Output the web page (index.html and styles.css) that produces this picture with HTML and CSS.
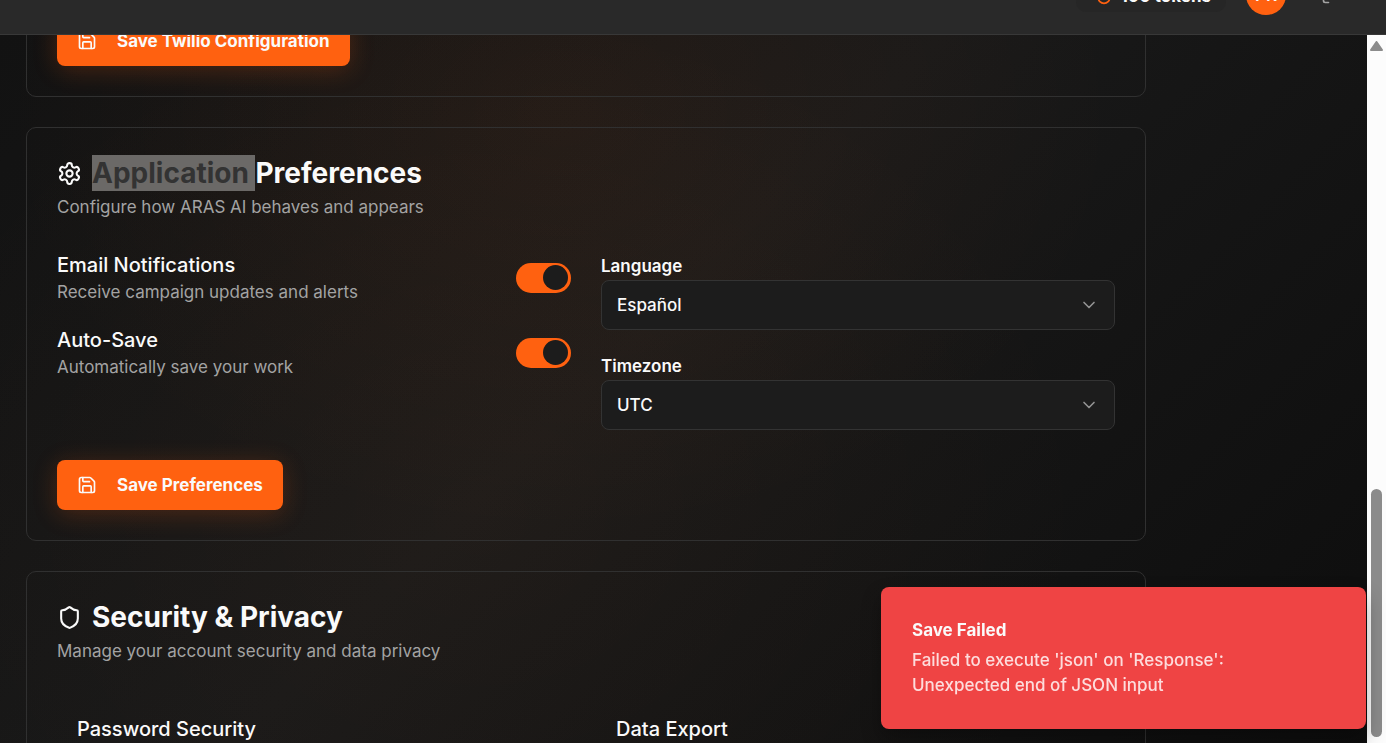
FILE: index.html
```html
<!DOCTYPE html>
<html lang="en">
<head>
<meta charset="utf-8">
<title>ARAS AI Settings</title>
<link rel="stylesheet" href="styles.css">
</head>
<body>
<header class="topbar">
  <div class="tokens">
    <svg class="icon-token" viewBox="0 0 24 24"><path d="M12 22a7 7 0 0 0 7-7c0-2-1-3.900-3-5.500S12.500 5 12 2.500c-.500 2.500-2 4.900-4 6.500C6 11 5 13 5 15a7 7 0 0 0 7 7z"/></svg>
    <span>100 tokens</span>
  </div>
  <button class="avatar" type="button">PR</button>
  <button class="logout" type="button" aria-label="Log out">
    <svg viewBox="0 0 24 24"><path d="M9 21H5a2 2 0 0 1-2-2V5a2 2 0 0 1 2-2h4"/><path d="m16 17 5-5-5-5M21 12H9"/></svg>
  </button>
</header>
<div class="viewport">
  <main class="content">
    <section class="card card-twilio">
      <button class="btn" type="button">
        <svg viewBox="0 0 24 24"><path d="M15.200 3a2 2 0 0 1 1.400.600l3.800 3.800a2 2 0 0 1 .600 1.400V19a2 2 0 0 1-2 2H5a2 2 0 0 1-2-2V5a2 2 0 0 1 2-2z"/><path d="M17 21v-7a1 1 0 0 0-1-1H8a1 1 0 0 0-1 1v7M7 3v4a1 1 0 0 0 1 1h7"/></svg>
        Save Twilio Configuration
      </button>
    </section>

    <section class="card">
      <div class="card-head">
        <h2 class="title">
          <svg viewBox="0 0 24 24"><path d="M12.220 2h-.440a2 2 0 0 0-2 2v.180a2 2 0 0 1-1 1.730l-.430.250a2 2 0 0 1-2 0l-.150-.080a2 2 0 0 0-2.730.730l-.220.380a2 2 0 0 0 .730 2.730l.150.100a2 2 0 0 1 1 1.720v.510a2 2 0 0 1-1 1.740l-.150.090a2 2 0 0 0-.730 2.730l.220.380a2 2 0 0 0 2.730.730l.150-.080a2 2 0 0 1 2 0l.430.250a2 2 0 0 1 1 1.730V20a2 2 0 0 0 2 2h.440a2 2 0 0 0 2-2v-.180a2 2 0 0 1 1-1.730l.430-.250a2 2 0 0 1 2 0l.150.080a2 2 0 0 0 2.730-.730l.220-.390a2 2 0 0 0-.730-2.730l-.150-.080a2 2 0 0 1-1-1.740v-.500a2 2 0 0 1 1-1.740l.150-.090a2 2 0 0 0 .730-2.730l-.220-.380a2 2 0 0 0-2.730-.730l-.150.080a2 2 0 0 1-2 0l-.430-.250a2 2 0 0 1-1-1.730V4a2 2 0 0 0-2-2z"/><circle cx="12" cy="12" r="3"/></svg>
          <span><mark class="selected">Application </mark>Preferences</span>
        </h2>
        <p class="muted">Configure how ARAS AI behaves and appears</p>
      </div>
      <div class="prefs">
        <div class="stack">
          <div class="row">
            <div>
              <label class="row-title" for="email">Email Notifications</label>
              <p class="muted">Receive campaign updates and alerts</p>
            </div>
            <input class="switch" id="email" type="checkbox" role="switch" checked>
          </div>
          <div class="row">
            <div>
              <label class="row-title" for="autosave">Auto-Save</label>
              <p class="muted">Automatically save your work</p>
            </div>
            <input class="switch" id="autosave" type="checkbox" role="switch" checked>
          </div>
        </div>
        <div class="stack">
          <div class="field">
            <label for="language">Language</label>
            <div class="select-wrap">
              <select id="language"><option>Español</option></select>
              <svg class="chevron" viewBox="0 0 24 24"><path d="m6 9 6 6 6-6"/></svg>
            </div>
          </div>
          <div class="field">
            <label for="timezone">Timezone</label>
            <div class="select-wrap">
              <select id="timezone"><option>UTC</option></select>
              <svg class="chevron" viewBox="0 0 24 24"><path d="m6 9 6 6 6-6"/></svg>
            </div>
          </div>
        </div>
      </div>
      <button class="btn" type="button">
        <svg viewBox="0 0 24 24"><path d="M15.200 3a2 2 0 0 1 1.400.600l3.800 3.800a2 2 0 0 1 .600 1.400V19a2 2 0 0 1-2 2H5a2 2 0 0 1-2-2V5a2 2 0 0 1 2-2z"/><path d="M17 21v-7a1 1 0 0 0-1-1H8a1 1 0 0 0-1 1v7M7 3v4a1 1 0 0 0 1 1h7"/></svg>
        Save Preferences
      </button>
    </section>

    <section class="card">
      <div class="card-head">
        <h2 class="title">
          <svg viewBox="0 0 24 24"><path d="M20 13c0 5-3.500 7.500-7.660 8.950a1 1 0 0 1-.670-.010C7.500 20.500 4 18 4 13V6a1 1 0 0 1 1-1c2 0 4.500-1.200 6.240-2.720a1.170 1.170 0 0 1 1.520 0C14.510 3.810 17 5 19 5a1 1 0 0 1 1 1z"/></svg>
          <span>Security &amp; Privacy</span>
        </h2>
        <p class="muted">Manage your account security and data privacy</p>
      </div>
      <div class="panels">
        <div class="panel"><h3 class="row-title">Password Security</h3></div>
        <div class="panel"><h3 class="row-title">Data Export</h3></div>
      </div>
    </section>
  </main>
  <div class="scrollbar" aria-hidden="true">
    <svg class="arrow" viewBox="0 0 13 10"><path d="M6.500 1 12 9H1z"/></svg>
    <div class="thumb"></div>
  </div>
</div>
<div class="toast" role="alert">
  <strong>Save Failed</strong>
  <p>Failed to execute 'json' on 'Response': Unexpected end of JSON input</p>
</div>
</body>
</html>
```
FILE: styles.css
```css
* { box-sizing: border-box; }

body {
  margin: 0;
  height: 100vh;
  display: flex;
  flex-direction: column;
  overflow: hidden;
  background: #131313;
  color: #fafafa;
  font-family: Inter, "Liberation Sans", sans-serif;
  font-size: 17px;
  line-height: 25px;
}

h2, h3, p { margin: 0; }
button, select { font: inherit; color: inherit; }
svg { fill: none; stroke: currentColor; stroke-width: 2; stroke-linecap: round; stroke-linejoin: round; flex: none; }

/* Header, partly scrolled out of view */
.topbar {
  flex: none;
  height: 80px;
  margin-top: -45px;
  padding-right: 45px;
  display: flex;
  align-items: center;
  justify-content: flex-end;
  gap: 20px;
  background: #292929;
  border-bottom: 1px solid #383838;
}
.tokens {
  display: flex;
  align-items: center;
  gap: 7px;
  height: 35px;
  padding: 0 15px 0 18px;
  border-radius: 10px;
  background: #262626;
  font-weight: 700;
}
.tokens span { padding-top: 4px; }
.icon-token { width: 20px; height: 20px; color: #ff6110; }
.avatar {
  width: 40px;
  height: 40px;
  padding: 2px 0 0;
  border: 0;
  border-radius: 50%;
  background: #ff6110;
  font-weight: 600;
}
.logout { display: flex; padding: 0 0 0 15px; border: 0; background: none; color: #a3a3a3; }
.logout svg { width: 20px; height: 20px; }

.viewport {
  flex: 1;
  min-height: 0;
  display: flex;
  overflow: hidden;
  background:
    radial-gradient(ellipse 560px 420px at 560px 80px, rgba(255, 110, 30, 0.06), transparent),
    radial-gradient(ellipse 620px 520px at 480px 480px, rgba(255, 130, 50, 0.035), transparent),
    linear-gradient(135deg, #121212 0%, #191919 45%, #0d0d0d 100%);
}
.content {
  flex: 1;
  margin-top: -20px;
  padding-left: 26px;
  display: flex;
  flex-direction: column;
  gap: 30px;
}

.card {
  flex: none;
  max-width: 1120px;
  padding: 30px;
  border: 1px solid #303030;
  border-radius: 10px;
}
.card-twilio { padding-top: 0; }
.card-head { margin-bottom: 30px; }
.title {
  display: flex;
  align-items: center;
  gap: 10px;
  margin-bottom: 7px;
  font-size: 28px;
  line-height: 30px;
  font-weight: 700;
}
.title svg { width: 25px; height: 25px; }
.selected { padding: 1px 0; background: #6b6967; color: #333; }
.muted { color: #a3a3a3; }

.prefs {
  display: grid;
  grid-template-columns: 1fr 1fr;
  gap: 30px;
  margin-bottom: 30px;
}
.stack { display: flex; flex-direction: column; gap: 20px; }
.row { display: flex; align-items: center; justify-content: space-between; }
.row-title { display: block; font-size: 20px; line-height: 30px; font-weight: 500; }

.switch {
  appearance: none;
  width: 55px;
  height: 30px;
  margin: 0;
  padding: 2px 3px;
  display: flex;
  justify-content: flex-end;
  border-radius: 15px;
  background: #ff6110;
}
.switch::before { content: ""; width: 25px; height: 25px; border-radius: 50%; background: #1c1c1c; }

.field label { display: block; padding-top: 2px; line-height: 28px; font-weight: 600; }
.select-wrap { display: grid; align-items: center; }
.select-wrap > * { grid-area: 1 / 1; }
.select-wrap select {
  appearance: none;
  width: 100%;
  height: 50px;
  padding: 0 15px;
  border: 1px solid #333;
  border-radius: 8px;
  background: #1c1c1c;
  font-weight: 500;
}
.chevron { width: 20px; height: 20px; margin-right: 16px; justify-self: end; color: #929292; pointer-events: none; }

.btn {
  display: flex;
  align-items: center;
  gap: 20px;
  height: 50px;
  padding: 0 20px;
  border: 0;
  border-radius: 8px;
  background: #ff6110;
  box-shadow: 0 4px 24px rgba(255, 97, 16, 0.22);
  font-weight: 700;
}
.btn svg { width: 20px; height: 20px; }

.panels { display: grid; grid-template-columns: 1fr 1fr; gap: 20px; }
.panel { padding: 20px; }

.scrollbar {
  flex: none;
  width: 19px;
  padding: 6px 4px;
  display: flex;
  flex-direction: column;
  align-items: center;
  justify-content: space-between;
  background: #fcfcfc;
}
.arrow { width: 13px; height: 10px; fill: #8b8b8b; stroke: #8b8b8b; }
.thumb { width: 11px; height: 248px; border-radius: 6px; background: #8b8b8b; }

.toast {
  position: fixed;
  right: 20px;
  bottom: 14px;
  width: 485px;
  padding: 31px;
  border-radius: 8px;
  background: #ef4444;
  box-shadow: 0 10px 20px rgba(0, 0, 0, 0.3);
}
.toast strong { display: block; margin-bottom: 5px; font-weight: 700; }
.toast p { max-width: 350px; color: #fddcdc; font-weight: 500; }
```
